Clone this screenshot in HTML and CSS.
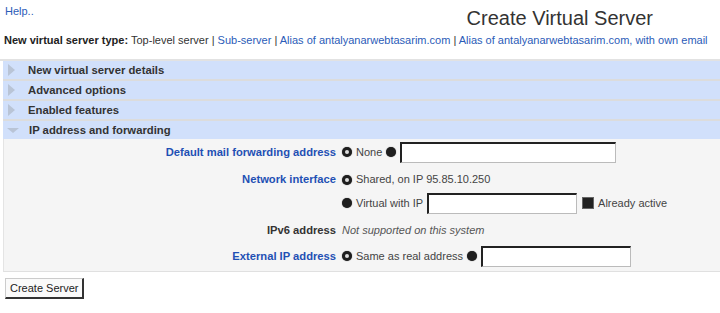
FILE: index.html
```html
<!DOCTYPE html>
<html>
<head>
    <title>Create Virtual Server</title>
    <link rel="stylesheet" href="styles.css">
</head>
<body>
    <div class="top">
        <a class="help" href="#">Help..</a>
        <h1>Create Virtual Server</h1>
    </div>
    <div class="types">
        <b>New virtual server type:</b> Top-level server |
        <a href="#">Sub-server</a> |
        <a href="#">Alias of antalyanarwebtasarim.com</a> |
        <a href="#">Alias of antalyanarwebtasarim.com, with own email</a>
    </div>

    <div class="sections">
        <div class="sec"><span class="arrow"></span>New virtual server details</div>
        <div class="sec"><span class="arrow"></span>Advanced options</div>
        <div class="sec"><span class="arrow"></span>Enabled features</div>
        <div class="sec open"><span class="arrow"></span>IP address and forwarding</div>

        <div class="fields">
            <div class="label link row-a">Default mail forwarding address</div>
            <div class="value row-a">
                <span class="radio on"></span> None
                <span class="radio"></span>
                <input type="text" class="txt wide">
            </div>

            <div class="label link row-b">Network interface</div>
            <div class="value stack">
                <div class="line"><span class="radio on"></span> Shared, on IP 95.85.10.250</div>
                <div class="line row-a">
                    <span class="radio"></span> Virtual with IP
                    <input type="text" class="txt mid">
                    <span class="check"></span> Already active
                </div>
            </div>

            <div class="label row-b short">IPv6 address</div>
            <div class="value row-b short"><i>Not supported on this system</i></div>

            <div class="label link row-a">External IP address</div>
            <div class="value row-a">
                <span class="radio on"></span> Same as real address
                <span class="radio"></span>
                <input type="text" class="txt mid">
            </div>
        </div>
    </div>

    <button type="button" class="create">Create Server</button>
</body>
</html>
```

FILE: styles.css
```css
body {
    font-family: "Liberation Sans", Arial, sans-serif;
    font-size: 11px;
    color: #333;
    background-color: #fff;
    margin: 0;
    padding: 0;
}
a {
    color: #2b5cb8;
    text-decoration: none;
}
.top {
    display: flex;
    align-items: flex-start;
    padding: 5px 5px 0 5px;
    height: 27px;
}
.help {
    font-size: 11px;
}
h1 {
    margin: 1px 62px 0 auto;
    font-size: 20px;
    font-weight: normal;
    color: #333;
    line-height: 24px;
}
.types {
    padding: 0 4px;
    line-height: 16px;
    height: 27px;
    border-bottom: 2px solid #e2e2e2;
}
.types b {
    color: #222;
}
.sections {
    margin-left: 3px;
}
.sec {
    display: flex;
    align-items: center;
    height: 18px;
    border-top: 2px solid #dcdcdc;
    background-color: #d1e0fb;
    font-weight: bold;
    font-size: 11.3px;
    color: #333;
}
.sec:first-child {
    border-top: none;
}
.arrow {
    width: 0;
    height: 0;
    margin: 0 13px 0 5px;
    border-top: 6px solid transparent;
    border-bottom: 6px solid transparent;
    border-left: 7px solid #b9c4d6;
}
.sec.open .arrow {
    margin: 0 10px 0 4px;
    border-left: 6px solid transparent;
    border-right: 6px solid transparent;
    border-top: 5px solid #b9c4d6;
    border-bottom: none;
}
.fields {
    display: grid;
    grid-template-columns: 332px 1fr;
    column-gap: 6px;
    row-gap: 9px;
    padding: 2px 0 4px 0;
    background-color: #f5f5f5;
    border-left: 1px solid #e4e4e4;
    border-bottom: 1px solid #e0e0e0;
}
.label {
    text-align: right;
    font-weight: bold;
    font-size: 11.2px;
    color: #333;
}
.label.link {
    color: #1f50b4;
}
.row-a {
    line-height: 22px;
    height: 22px;
}
.row-b {
    line-height: 15px;
}
.row-b.short {
    line-height: 14px;
    height: 13px;
}
.value {
    display: flex;
    align-items: center;
    gap: 4px;
    color: #444;
}
.value.stack {
    flex-direction: column;
    align-items: flex-start;
    gap: 5px;
}
.line {
    display: flex;
    align-items: center;
    gap: 4px;
    line-height: 15px;
}
.value i {
    color: #555;
}
.radio {
    position: relative;
    display: inline-block;
    width: 10px;
    height: 10px;
    border-radius: 50%;
    background-color: #1e1e1e;
    box-shadow: 0 0 1px #555;
}
.radio.on::after {
    content: "";
    position: absolute;
    left: 3px;
    top: 3px;
    width: 4px;
    height: 4px;
    border-radius: 50%;
    background-color: #ddd;
}
.check {
    display: inline-block;
    width: 10px;
    height: 10px;
    background-color: #222;
    border: 1px solid #666;
    margin-left: 1px;
}
.txt {
    box-sizing: border-box;
    height: 21px;
    padding: 0 3px;
    background-color: #fff;
    border-style: solid;
    border-width: 2px 1px 1px 2px;
    border-color: #222 #bbb #bbb #222;
    font-family: inherit;
    font-size: 11px;
}
.wide {
    width: 216px;
}
.mid {
    width: 150px;
}
.create {
    margin: 6px 0 0 5px;
    padding: 2px 4px;
    height: 21px;
    background-color: #fafafa;
    border-style: solid;
    border-width: 1px 2px 2px 1px;
    border-color: #ccc #333 #333 #ccc;
    font-family: inherit;
    font-size: 11px;
    color: #222;
}
```
